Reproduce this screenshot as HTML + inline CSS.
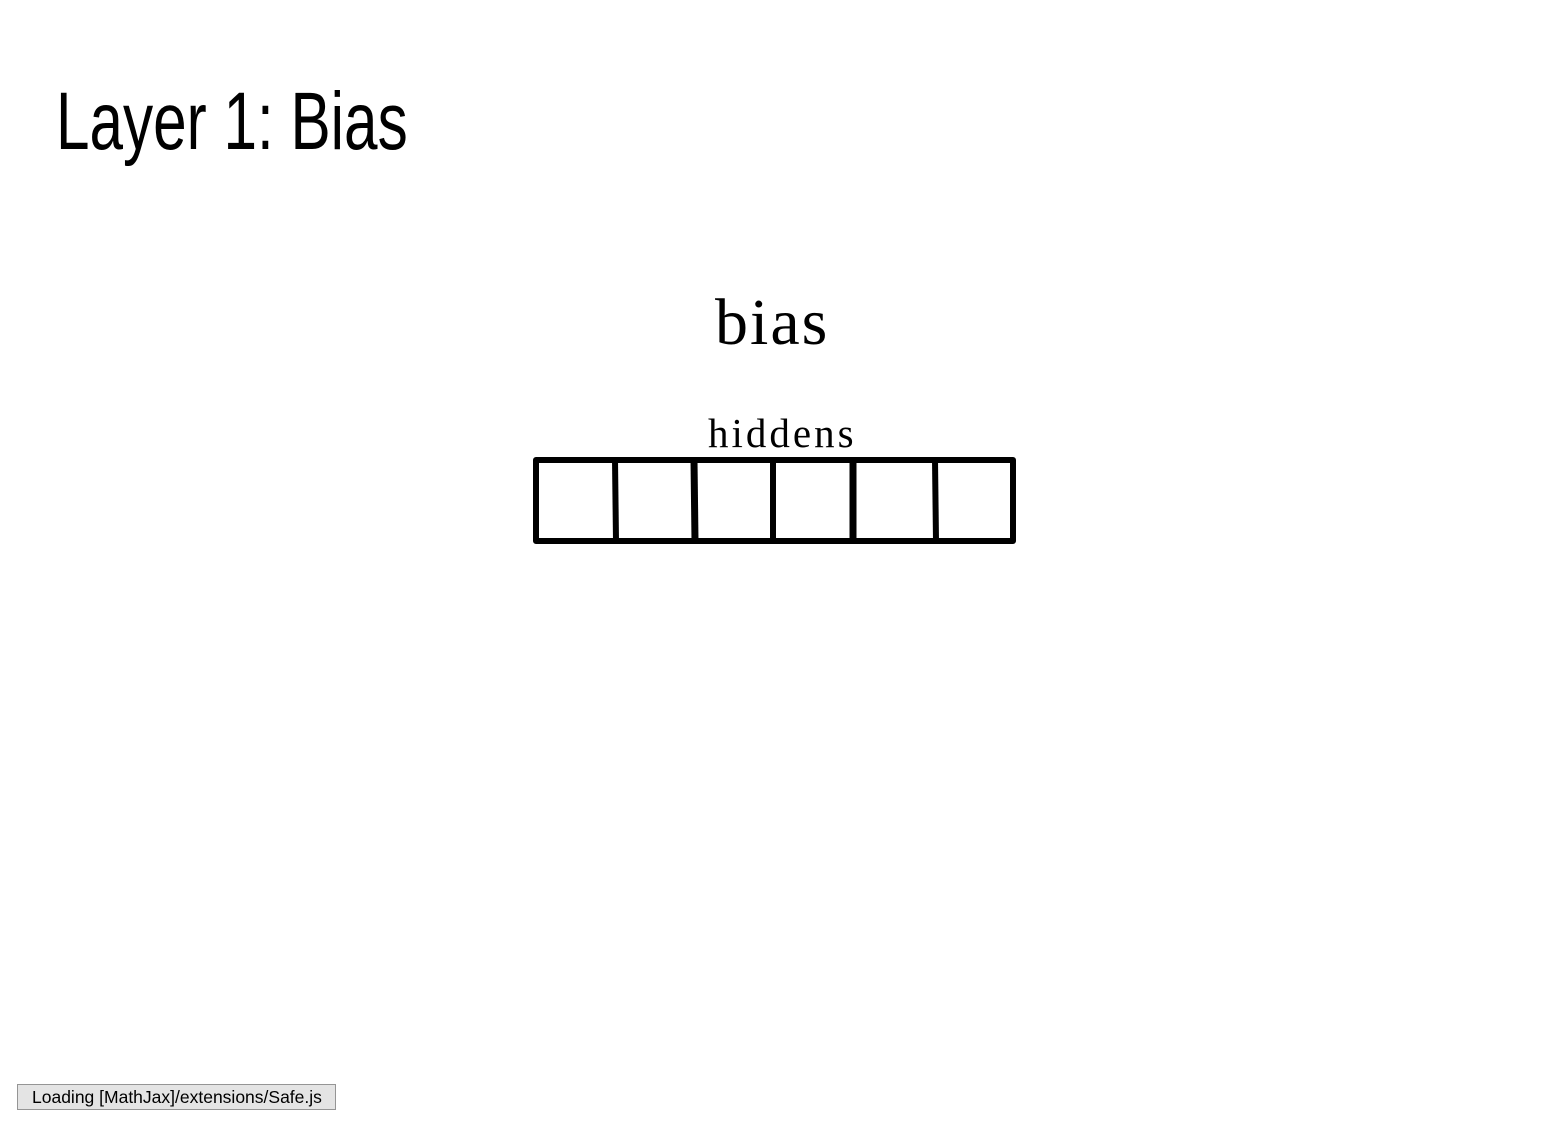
<!DOCTYPE html>
<html><head><style>
html,body{margin:0;padding:0;background:#fff;width:1561px;height:1138px;overflow:hidden;position:relative}
.t{position:absolute;left:56px;top:72px;font-family:"Liberation Sans",sans-serif;font-size:82px;line-height:100px;color:#000;transform:scaleX(0.7);transform-origin:0 0;white-space:nowrap}
.b{position:absolute;font-family:"Liberation Serif",serif;color:#000;white-space:nowrap}
.l{position:absolute;left:17px;top:1084px;width:319px;height:26px;background:#e4e4e4;border:1px solid #959595;font-family:"Liberation Sans",sans-serif;font-size:17.5px;line-height:24px;box-sizing:border-box;padding-left:14px;white-space:nowrap}
</style></head><body>
<div class="t" id="t">Layer 1: Bias</div>
<div class="b" style="left:715px;top:283px;font-size:66px;line-height:80px;letter-spacing:2px">bias</div>
<div class="b" style="left:708px;top:408px;font-size:41px;line-height:50px;letter-spacing:3px">hiddens</div>
<svg style="position:absolute;left:0;top:0" width="1561" height="1138">
<g stroke="#000" stroke-width="6" fill="none" stroke-linejoin="round">
<rect x="536" y="460" width="477" height="81"/>
<line x1="615" y1="460" x2="616" y2="541"/>
<line x1="694" y1="460" x2="695" y2="541" stroke-width="7"/>
<line x1="773" y1="460" x2="773" y2="541"/>
<line x1="853" y1="460" x2="853" y2="541" stroke-width="7"/>
<line x1="935" y1="460" x2="936" y2="541"/>
</g></svg>
<div class="l">Loading [MathJax]/extensions/Safe.js</div>
<script>
var t=document.getElementById('t');var w=t.scrollWidth;t.style.transform='scaleX('+(352/w)+')';
</script>
</body></html>
